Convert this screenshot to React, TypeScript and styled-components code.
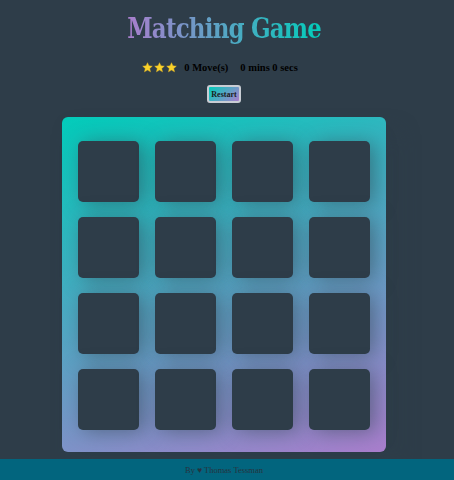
import React from "react";
import styled, { createGlobalStyle } from "styled-components";

const Global = createGlobalStyle`
  html, body { margin: 0; padding: 0; background: #2e3d49; }
  body { font-family: "Liberation Serif", serif; }
`;

const Page = styled.div`
  display: flex;
  flex-direction: column;
  min-height: 480px;
`;

const Main = styled.main`
  width: 448px;
  display: flex;
  flex-direction: column;
  align-items: center;
`;

const Title = styled.h1`
  margin: 10px 0 0;
  height: 38px;
  font-family: "DejaVu Serif", serif;
  font-weight: 700;
  font-size: 28px;
  line-height: 38px;
  letter-spacing: -1px;
  transform: scaleX(0.82);
  background: linear-gradient(90deg, #aa7ecd 0%, #02ccba 100%);
  -webkit-background-clip: text;
  background-clip: text;
  color: transparent;
`;

const Stats = styled.div`
  display: flex;
  align-items: center;
  margin-top: 10px;
  padding-right: 8px;
  height: 18px;
  font-family: "Liberation Serif", serif;
  font-weight: 700;
  font-size: 10.5px;
  color: #000;
`;

const Stars = styled.div`
  display: flex;
  gap: 1px;
  margin-right: 7px;
`;

const Moves = styled.span`
  margin-right: 12px;
`;

const RestartButton = styled.button`
  margin-top: 9px;
  width: 34px;
  height: 18px;
  padding: 0;
  border: 2px solid #c9cdd4;
  border-radius: 3px;
  background: linear-gradient(135deg, #02ccba 0%, #aa7ecd 100%);
  font-family: "Liberation Serif", serif;
  font-weight: 700;
  font-size: 8px;
  color: #1b1b1b;
`;

const Deck = styled.div`
  margin-top: 14px;
  width: 324px;
  box-sizing: border-box;
  padding: 24px 16px 22px;
  display: grid;
  grid-template-columns: repeat(4, 61px);
  grid-auto-rows: 61px;
  column-gap: 16px;
  row-gap: 15px;
  border-radius: 6px;
  background: linear-gradient(160deg, #02ccba 0%, #aa7ecd 100%);
  box-shadow: 12px 15px 20px 0 rgba(46, 61, 73, 0.5);
`;

const Card = styled.div`
  background: #2e3d49;
  border-radius: 5px;
  box-shadow: 5px 2px 20px 0 rgba(46, 61, 73, 0.5);
`;

const Footer = styled.footer`
  margin-top: auto;
  width: 100%;
  height: 21px;
  background: #02657e;
  display: flex;
  align-items: center;
  justify-content: center;
  padding-right: 6px;
  box-sizing: border-box;
  font-family: "Liberation Serif", serif;
  font-size: 8.5px;
  color: #26343f;
`;

const Star = () => (
  <svg width="11" height="11" viewBox="0 0 24 24">
    <path
      d="M12 1.5l3.1 6.9 7.4.7-5.6 5 1.7 7.4L12 17.6l-6.6 3.9 1.7-7.4-5.6-5 7.4-.7z"
      fill="#f9d22b"
      stroke="#e8b923"
      strokeWidth="1"
      strokeLinejoin="round"
    />
  </svg>
);

export default function App() {
  return (
    <>
      <Global />
      <Page>
        <Main>
          <Title>Matching Game</Title>
          <Stats>
            <Stars>
              <Star />
              <Star />
              <Star />
            </Stars>
            <Moves>0 Move(s)</Moves>
            <span>0 mins 0 secs</span>
          </Stats>
          <RestartButton>Restart</RestartButton>
          <Deck>
            {Array.from({ length: 16 }).map((_, i) => (
              <Card key={i} />
            ))}
          </Deck>
        </Main>
        <Footer>By ♥ Thomas Tessman</Footer>
      </Page>
    </>
  );
}
